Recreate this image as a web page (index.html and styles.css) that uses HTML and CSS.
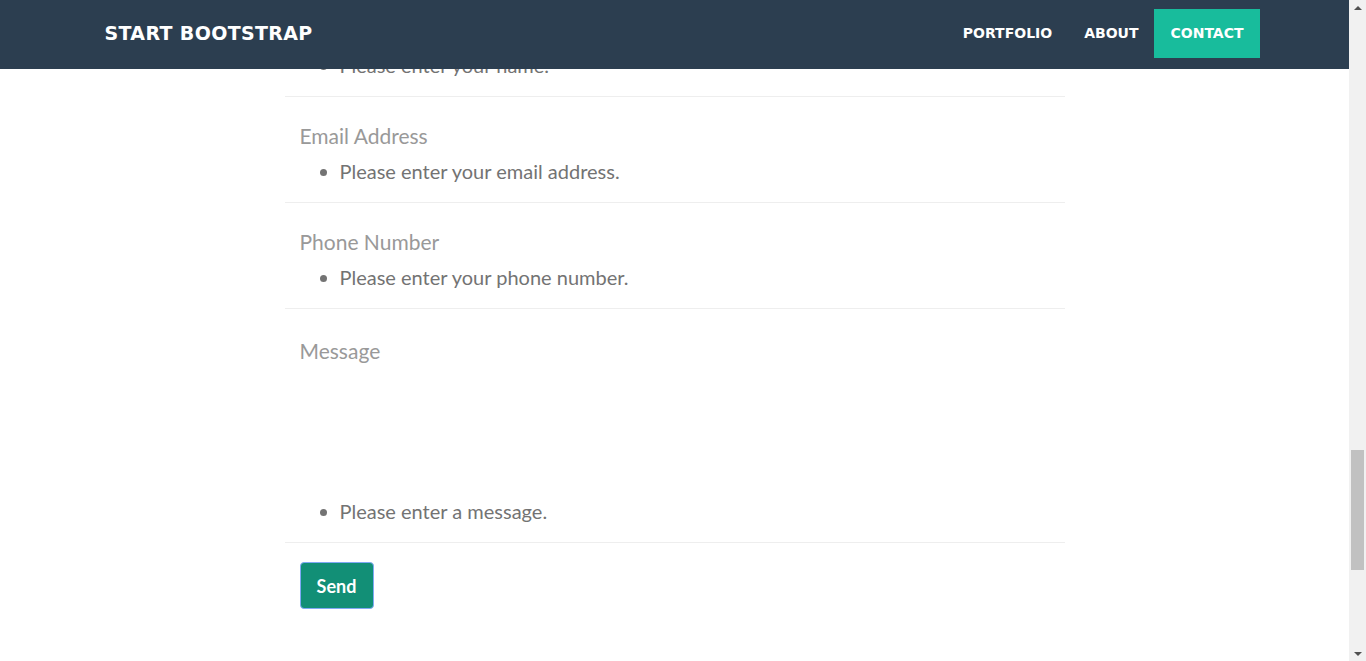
FILE: index.html
```html
<!DOCTYPE html>
<html lang="en">
<head>
<meta charset="utf-8">
<title>Start Bootstrap - Contact</title>
<link rel="stylesheet" href="styles.css">
</head>
<body>
<div class="page">
  <nav class="navbar">
    <div class="container nav-inner">
      <a class="brand" href="#">Start Bootstrap</a>
      <ul class="nav-links">
        <li><a href="#">Portfolio</a></li>
        <li><a href="#">About</a></li>
        <li class="active"><a href="#">Contact</a></li>
      </ul>
    </div>
  </nav>

  <main class="container">
    <div class="col">
      <form class="contact-form" novalidate>
        <div class="form-group first">
          <ul class="help"><li>Please enter your name.</li></ul>
        </div>
        <div class="form-group">
          <input class="field" type="email" placeholder="Email Address">
          <ul class="help"><li>Please enter your email address.</li></ul>
        </div>
        <div class="form-group">
          <input class="field" type="tel" placeholder="Phone Number">
          <ul class="help"><li>Please enter your phone number.</li></ul>
        </div>
        <div class="form-group">
          <textarea class="field area" placeholder="Message"></textarea>
          <ul class="help"><li>Please enter a message.</li></ul>
        </div>
        <div class="actions">
          <button type="button" class="btn-send">Send</button>
        </div>
      </form>
    </div>
  </main>
</div>

<div class="scrollbar">
  <span class="arrow up"></span>
  <span class="track"><span class="thumb"></span></span>
  <span class="arrow down"></span>
</div>
</body>
</html>
```

FILE: styles.css
```css
html, body {
  margin: 0;
  padding: 0;
  background: #fff;
  overflow: hidden;
  height: 661px;
}

body {
  font-family: Lato, "Open Sans", sans-serif;
  color: #2c3e50;
}

.page {
  width: 1349px;
  height: 661px;
  overflow: hidden;
}

.container {
  width: 1170px;
  margin: 0 auto;
  box-sizing: border-box;
}

/* Navbar */
.navbar {
  position: fixed;
  top: 0;
  left: 0;
  width: 1349px;
  height: 69px;
  background: #2c3e50;
  z-index: 10;
}

.nav-inner {
  height: 69px;
  box-sizing: border-box;
  padding: 0 0 2px 15px;
  display: flex;
  align-items: center;
  justify-content: space-between;
}

.brand {
  font-family: "DejaVu Sans", sans-serif;
  font-weight: 700;
  font-size: 19px;
  color: #fff;
  text-decoration: none;
  text-transform: uppercase;
  letter-spacing: 0.35px;
  margin-top: -2px;
}

.nav-links {
  list-style: none;
  margin: 0;
  padding: 0;
  display: flex;
  align-items: center;
}

.nav-links a {
  display: flex;
  align-items: center;
  height: 49px;
  padding: 0 16px 1px;
  box-sizing: border-box;
  font-family: "DejaVu Sans", sans-serif;
  font-weight: 700;
  font-size: 14px;
  color: #fff;
  text-decoration: none;
  text-transform: uppercase;
}

.nav-links .active a {
  background: #18bc9c;
}

/* Form column */
.col {
  margin-left: 195px;
  width: 780px;
}

.form-group {
  padding: 21px 15px 17px;
  border-bottom: 1px solid #eee;
}

.form-group.first {
  padding-top: 0;
}

.form-group.first .help {
  margin-top: 51px;
}

.field {
  display: block;
  width: 100%;
  box-sizing: border-box;
  height: 34px;
  padding: 0;
  border: none;
  outline: none;
  background: transparent;
  font-family: Lato, sans-serif;
  font-size: 21px;
  color: #555;
}

.field::placeholder {
  color: #999;
  opacity: 1;
}

.area {
  height: 162px;
  padding: 6px 0 0;
  line-height: 30px;
  resize: none;
}

.help {
  margin: 5px 0 0;
  padding-left: 40px;
  font-size: 20px;
  line-height: 28px;
  color: #737373;
}

.actions {
  padding: 19px 15px 0;
}

.btn-send {
  box-sizing: border-box;
  width: 74px;
  height: 47px;
  padding: 0;
  border: 1px solid #7fa9f5;
  border-radius: 4px;
  background: #128f76;
  color: #fff;
  font-family: Lato, sans-serif;
  font-weight: 700;
  font-size: 18px;
  cursor: pointer;
}

/* Fake browser scrollbar */
.scrollbar {
  position: fixed;
  top: 0;
  right: 0;
  width: 17px;
  height: 661px;
  background: #f1f1f1;
  display: flex;
  flex-direction: column;
  align-items: center;
  z-index: 20;
}

.arrow {
  width: 0;
  height: 0;
  border-left: 4px solid transparent;
  border-right: 4px solid transparent;
}

.arrow.up {
  margin-top: 6px;
  border-bottom: 4px solid #505050;
}

.arrow.down {
  margin-bottom: 5px;
  border-top: 4px solid #505050;
}

.track {
  flex: 1;
  width: 100%;
  display: flex;
  justify-content: center;
}

.thumb {
  margin-top: 440px;
  width: 13px;
  height: 120px;
  background: #c1c1c1;
}
```
